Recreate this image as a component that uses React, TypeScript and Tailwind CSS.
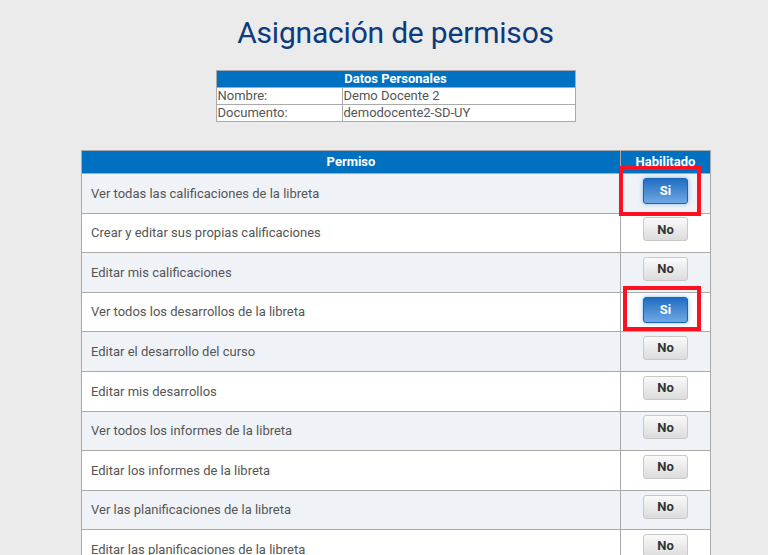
import React from "react"

type Box = { left: number; top: number; w: number; h: number }

const permisos: { label: string; on: boolean; box?: Box }[] = [
  { label: "Ver todas las calificaciones de la libreta", on: true, box: { left: -24, top: -12, w: 82, h: 50 } },
  { label: "Crear y editar sus propias calificaciones", on: false },
  { label: "Editar mis calificaciones", on: false },
  { label: "Ver todos los desarrollos de la libreta", on: true, box: { left: -20, top: -11, w: 78, h: 45 } },
  { label: "Editar el desarrollo del curso", on: false },
  { label: "Editar mis desarrollos", on: false },
  { label: "Ver todos los informes de la libreta", on: false },
  { label: "Editar los informes de la libreta", on: false },
  { label: "Ver las planificaciones de la libreta", on: false },
  { label: "Editar las planificaciones de la libreta", on: false },
]

function Toggle({ on }: { on: boolean }) {
  if (on) {
    return (
      <button className="w-[45px] h-[26px] rounded-[3px] border border-[#1a64b4] bg-gradient-to-b from-[#1e6cc2] to-[#6ea8e2] text-white font-bold text-[13px] shadow-[0_0_4px_rgba(60,140,220,0.6)]">
        Si
      </button>
    )
  }
  return (
    <button className="w-[45px] h-[24px] rounded-[3px] border border-[#c8c8c8] bg-gradient-to-b from-[#fafafa] to-[#dcdcdc] text-[#333] font-bold text-[13px]">
      No
    </button>
  )
}

export default function App() {
  return (
    <div className="w-full h-[555px] overflow-hidden bg-[#ebebeb] pl-[23px] font-['Roboto',sans-serif]">
      {/* Title */}
      <h1 className="pt-[13px] text-center text-[30px] leading-[40px] text-[#0d3b7e] tracking-[-0.2px]">
        Asignación de permisos
      </h1>

      {/* Datos personales */}
      <table className="mx-auto mt-[17px] w-[360px] border-collapse text-[13px] leading-[16px] text-[#555]">
        <thead>
          <tr>
            <th colSpan={2} className="h-[17px] bg-[#0070c0] border border-[#aaa] text-white font-bold p-0">
              Datos Personales
            </th>
          </tr>
        </thead>
        <tbody className="bg-white">
          <tr>
            <td className="w-[126px] border border-[#aaa] px-[1px] h-[17px] p-0">Nombre:</td>
            <td className="border border-[#aaa] px-[1px] p-0">Demo Docente 2</td>
          </tr>
          <tr>
            <td className="border border-[#aaa] px-[1px] h-[17px] p-0">Documento:</td>
            <td className="border border-[#aaa] px-[1px] p-0">demodocente2-SD-UY</td>
          </tr>
        </tbody>
      </table>

      {/* Permisos */}
      <table className="ml-[58px] mt-[28px] w-[630px] border-collapse text-[13px] text-[#555]">
        <thead>
          <tr className="h-[23px]">
            <th className="bg-[#0070c0] border border-[#aaa] text-white font-bold text-[13px] p-0">Permiso</th>
            <th className="w-[90px] bg-[#0070c0] border border-[#aaa] text-white font-bold text-[13px] p-0">Habilitado</th>
          </tr>
        </thead>
        <tbody>
          {permisos.map((p, i) => (
            <tr key={i} className={`h-[39.6px] ${i % 2 === 0 ? "bg-[#eff3f8]" : "bg-white"}`}>
              <td className="border border-[#aaa] pl-[9px] p-0">{p.label}</td>
              <td className="border border-[#aaa] p-0 text-center">
                {p.on && p.box ? (
                  <div className="relative inline-block align-middle pb-[5px]">
                    <div
                      className="absolute border-4 border-[#ff1020]"
                      style={{ left: p.box.left, top: p.box.top, width: p.box.w, height: p.box.h }}
                    />
                    <Toggle on />
                  </div>
                ) : (
                  <div className="inline-block align-middle pb-[7px]">
                    <Toggle on={false} />
                  </div>
                )}
              </td>
            </tr>
          ))}
        </tbody>
      </table>
    </div>
  )
}
